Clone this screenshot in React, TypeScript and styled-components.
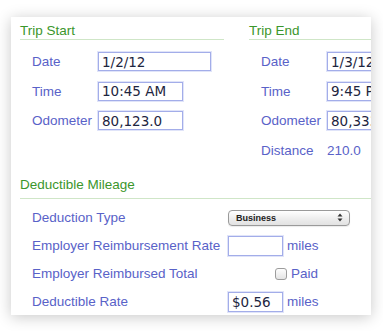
import { FC } from 'react'
import styled, { createGlobalStyle } from 'styled-components'

const GlobalStyle = createGlobalStyle`
  html, body {
    margin: 0;
    padding: 0;
    background: #ffffff;
  }
  body {
    font-family: 'Liberation Sans', Arial, Helvetica, sans-serif;
    width: 383px;
    height: 331px;
    overflow: hidden;
  }
`

interface TripField {
  label: string
  value: string
  width: number
}

const tripStart: TripField[] = [
  { label: 'Date', value: '1/2/12', width: 113 },
  { label: 'Time', value: '10:45 AM', width: 85 },
  { label: 'Odometer', value: '80,123.0', width: 85 }
]

const tripEnd: TripField[] = [
  { label: 'Date', value: '1/3/12', width: 113 },
  { label: 'Time', value: '9:45 PM', width: 85 },
  { label: 'Odometer', value: '80,333.0', width: 85 }
]

const TripSection: FC<{ title: string; fields: TripField[]; distance?: string }> = ({ title, fields, distance }) => (
  <Section>
    <Heading>{title}</Heading>
    <TripGrid>
      {fields.map((f) => (
        <FieldRow key={f.label}>
          <Label>{f.label}</Label>
          <TextInput $width={f.width} defaultValue={f.value} readOnly />
        </FieldRow>
      ))}
      {distance && (
        <FieldRow>
          <Label>Distance</Label>
          <Value>{distance}</Value>
        </FieldRow>
      )}
    </TripGrid>
  </Section>
)

const Arrows = () => (
  <svg width="6" height="9" viewBox="0 0 6 9">
    <path d="M3 0.5 L5.5 3.5 L0.5 3.5 Z" fill="#333" />
    <path d="M3 8.5 L5.5 5.5 L0.5 5.5 Z" fill="#333" />
  </svg>
)

const App: FC = () => {
  return (
    <>
      <GlobalStyle />
      <Card>
        <TopRow>
          <TripSection title="Trip Start" fields={tripStart} />
          <TripSection title="Trip End" fields={tripEnd} distance="210.0" />
        </TopRow>

        <Heading $gap={16} $pad={5}>
          Deductible Mileage
        </Heading>
        <DeductGrid>
          <Label>Deduction Type</Label>
          <Control>
            <SelectBox>
              <span>Business</span>
              <Arrows />
            </SelectBox>
          </Control>

          <Label>Employer Reimbursement Rate</Label>
          <Control>
            <TextInput $width={55} $height={20} readOnly />
            <Unit>miles</Unit>
          </Control>

          <Label>Employer Reimbursed Total</Label>
          <Control $indent={47}>
            <Checkbox />
            <Unit>Paid</Unit>
          </Control>

          <Label>Deductible Rate</Label>
          <Control>
            <TextInput $width={55} $height={20} defaultValue="$0.56" readOnly />
            <Unit>miles</Unit>
          </Control>
        </DeductGrid>
      </Card>
    </>
  )
}

const Card = styled.div`
  margin: 17px 0 0 11px;
  width: 360px;
  height: 298px;
  padding-left: 9px;
  box-sizing: border-box;
  background: #fff;
  overflow: hidden;
  box-shadow: 0 2px 14px rgba(0, 0, 0, 0.22);
`

const TopRow = styled.div`
  display: flex;
  gap: 25px;
`

const Section = styled.div`
  width: 204px;
  flex-shrink: 0;
`

const Heading = styled.div<{ $gap?: number; $pad?: number }>`
  margin-top: ${(p) => p.$gap ?? 0}px;
  padding-top: ${(p) => (p.$gap ? 0 : 5)}px;
  padding-bottom: ${(p) => p.$pad ?? 0}px;
  font-size: 13.5px;
  line-height: 17px;
  color: #3b962c;
  border-bottom: 1px solid #cfe6c7;
`

const TripGrid = styled.div`
  margin-top: 12px;
  padding-left: 12px;
  display: flex;
  flex-direction: column;
  gap: 10.5px;
`

const FieldRow = styled.div`
  display: flex;
  align-items: center;
  height: 19px;
`

const Label = styled.div`
  width: 66px;
  flex-shrink: 0;
  font-size: 13.5px;
  color: #5962c8;
  white-space: nowrap;
`

const Value = styled.div`
  font-size: 13.5px;
  color: #5962c8;
`

const TextInput = styled.input<{ $width: number; $height?: number }>`
  width: ${(p) => p.$width}px;
  height: ${(p) => p.$height ?? 19}px;
  flex-shrink: 0;
  box-sizing: border-box;
  margin: 0;
  padding: 0 3px;
  border: 1px solid #a3ade9;
  box-shadow: 0 0 0 1px #e0e4f9;
  outline: none;
  background: #fff;
  font-family: 'DejaVu Sans', Verdana, sans-serif;
  font-size: 13.5px;
  color: #1d2540;
`

const DeductGrid = styled.div`
  margin-top: 5px;
  padding-left: 12px;
  display: grid;
  grid-template-columns: 196px auto;
  grid-auto-rows: 28px;
  align-items: center;

  ${Label} {
    width: auto;
  }
`

const Control = styled.div<{ $indent?: number }>`
  display: flex;
  align-items: center;
  gap: 4px;
  padding-left: ${(p) => p.$indent ?? 0}px;
`

const Unit = styled.span`
  font-size: 13.5px;
  color: #5962c8;
`

const SelectBox = styled.div`
  width: 122px;
  height: 16px;
  box-sizing: border-box;
  display: flex;
  align-items: center;
  justify-content: space-between;
  padding: 0 6px 0 7px;
  border: 1px solid #9a9a9a;
  border-radius: 4px;
  background: linear-gradient(#ffffff, #ececec 60%, #e2e2e2);
  box-shadow: 0 1px 1px rgba(0, 0, 0, 0.08);
  font-size: 9px;
  font-weight: bold;
  color: #222;
`

const Checkbox = styled.span`
  width: 12px;
  height: 12px;
  box-sizing: border-box;
  border: 1px solid #9c9c9c;
  border-radius: 3px;
  background: linear-gradient(#fdfdfd, #e4e4e4);
`

export default App
